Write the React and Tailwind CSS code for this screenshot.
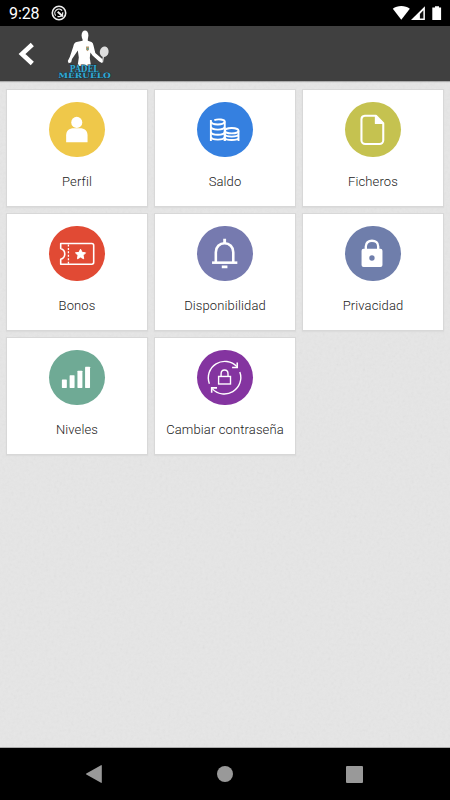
import React from 'react';

const ProfileIcon = () => (
  <g fill="#fff">
    <circle cx="28" cy="20.6" r="5.6" />
    <path d="M17.3 40.6V33.5C17.3 29 20.5 26.4 25 26.4h6.2c4.5 0 7.7 2.6 7.7 7.1v7.1z" />
  </g>
);

const CoinsIcon = () => (
  <g fill="none" stroke="#fff" strokeWidth="1.9">
    <path d="M17.5 18.2c4-1.4 10.5-.6 10.5 1.5v19.6M14 18.2v21.1" />
    <path d="M14 19.7c1 4 13 4 14 0M14 25c1 3.800 13 3.800 14 0M14 30.200c1 3.800 13 3.800 14 0M14 35.400c1 3.400 13 3.400 14 0" />
    <ellipse cx="35" cy="29" rx="6.9" ry="2.7" />
    <path d="M41.9 29v10.3M28 29v10.3M28 32.5c1 3.200 13 3.200 14 0M28 36c1 3.200 13 3.200 14 0" />
  </g>
);

const FileIcon = () => (
  <g fill="none" stroke="#fff" strokeWidth="2.1" strokeLinejoin="round">
    <path d="M20 13.9h11.2l7.4 7.5v17.2a3.8 3.8 0 0 1-3.8 3.8H20.4a3.8 3.8 0 0 1-3.8-3.8V17.5a3.6 3.6 0 0 1 3.4-3.6z" />
    <path d="M30.7 14v7.6h7.6z" fill="#fff" strokeWidth="1.2" />
  </g>
);

const TicketIcon = () => (
  <g fill="none" stroke="#fff" strokeWidth="1.6" strokeLinejoin="round">
    <path d="M11.8 17.700h31.400a1.900 1.900 0 0 1 1.900 1.900v17.100a1.900 1.900 0 0 1-1.900 1.900H11.800v-5c3.300-1 4.100-3 4.100-5.400s-.8-4.400-4.100-5.400z" />
    <path d="M19.6 18.6v19.6" strokeDasharray="2 1.5" strokeWidth="1.3" />
    <path
      d="M31.8 23.4l1.6 3.2 3.5.5-2.5 2.500.6 3.500-3.200-1.700-3.100 1.700.6-3.500-2.600-2.500 3.600-.5z"
      fill="#fff"
      strokeWidth="1"
    />
  </g>
);

const BellIcon = () => (
  <g fill="none" stroke="#fff" strokeWidth="2.6">
    <path d="M19 36.5V26.400c0-5.300 3.800-9 8.800-9s8.800 3.700 8.800 9v10.100" />
    <path d="M15.2 37h25.5" />
    <path d="M27.9 12.8v4.4M25 41.3h5.7" strokeWidth="2.9" />
  </g>
);

const LockIcon = () => (
  <g fill="none" stroke="#fff">
    <path d="M21 24v-3.400c0-3.600 2.600-5.700 6.200-5.700s6.300 2.100 6.300 5.700V24" strokeWidth="2.4" />
    <path
      fillRule="evenodd"
      fill="#fff"
      stroke="none"
      d="M18.7 23h17.100a2 2 0 0 1 2 2v14.300a2 2 0 0 1-2 2H18.700a2 2 0 0 1-2-2V25a2 2 0 0 1 2-2zM27.200 29.600a2.700 2.700 0 1 0 0 5.400 2.700 2.700 0 1 0 0-5.400z"
    />
  </g>
);

const LevelsIcon = () => (
  <g fill="#fff">
    <rect x="13" y="29.7" width="5" height="8.7" rx=".5" />
    <rect x="20.8" y="25.4" width="5" height="13" rx=".5" />
    <rect x="28.7" y="21" width="5" height="17.4" rx=".5" />
    <rect x="36.4" y="16.8" width="5" height="21.6" rx=".5" />
  </g>
);

const ChangePasswordIcon = () => (
  <g fill="none" stroke="#fff" strokeWidth="1.4">
    <path d="M12.5 34A16.6 16.6 0 0 1 40.2 16.8" />
    <path d="M40.6 12.6v5h-5.2" strokeWidth="1.6" />
    <path d="M43.2 22.2A16.6 16.6 0 0 1 15.3 39" />
    <path d="M14.8 43.2v-5h5.4" strokeWidth="1.6" />
    <rect x="21.8" y="26.7" width="12" height="7.6" />
    <path d="M24.3 26.500v-2.400c0-2.400 1.300-3.900 3.500-3.900s3.500 1.500 3.500 3.900v2.400" />
  </g>
);

const menuItems = [
  { label: 'Perfil', color: 'bg-[#efc84a]', icon: ProfileIcon },
  { label: 'Saldo', color: 'bg-[#3580e0]', icon: CoinsIcon },
  { label: 'Ficheros', color: 'bg-[#c5c250]', icon: FileIcon },
  { label: 'Bonos', color: 'bg-[#e14a34]', icon: TicketIcon },
  { label: 'Disponibilidad', color: 'bg-[#767aaf]', icon: BellIcon },
  { label: 'Privacidad', color: 'bg-[#6f7eab]', icon: LockIcon },
  { label: 'Niveles', color: 'bg-[#6faa95]', icon: LevelsIcon },
  { label: 'Cambiar contraseña', color: 'bg-[#8434a0]', icon: ChangePasswordIcon },
];

const Logo = () => (
  <svg width="56" height="52" viewBox="0 0 56 52">
    {/* Jugador */}
    <g fill="#fff">
      <ellipse cx="28" cy="7.4" rx="3.4" ry="5" />
      <path d="M25.600 9.500h5.200v3.300l3.700 1.300q1.600.8 2 3.400l1.800 7.500 7.200 6.300-.6 3.700-2.700-1.500-6.700-6.100-2.100-3-.6 5.600 1.200 8H20.600l1.200-8.500-1-7-5.800 8.500-.8 3.300-2.500 1-.9-2.400 2-3.800 3.500-10.600q.6-3.600 3.200-4.400l6.100-1.300z" />
      <path d="M45.4 34.500l1.100-6.500" stroke="#ddd" strokeWidth="1.3" />
      <ellipse cx="47.200" cy="23.8" rx="4.400" ry="5.300" fill="#dedede" transform="rotate(12 47.200 23.800)" />
    </g>
    <path d="M29 18.600h3v3.200l-1.500 1.400-1.500-1.400z" fill="#b49a72" />
    <path d="M30.200 20h1.200v1.700h-1.200z" fill="#39a3a8" />
    {/* Nombre del club */}
    <g
      fill="#32a9d4"
      stroke="#1c3038"
      strokeWidth=".8"
      paintOrder="stroke"
      fontFamily="'DejaVu Serif', serif"
      fontWeight="700"
    >
      <text x="12.7" y="43.6" fontSize="9.4" textLength="29" lengthAdjust="spacingAndGlyphs">PADEL</text>
      <text x="1.200" y="49.500" fontSize="7.300" textLength="52.500" lengthAdjust="spacingAndGlyphs">MERUELO</text>
    </g>
  </svg>
);

const StatusBar = () => (
  <div className="flex h-[26px] items-center justify-between bg-black pl-[9px] pr-[8px] text-white">
    <div className="flex items-center gap-[12px]">
      <span className="pt-px text-[16px] leading-[25px] tracking-[-0.1px]">9:28</span>
      <svg width="16" height="16" viewBox="0 0 16 16" fill="none" stroke="#eee">
        <circle cx="8" cy="8" r="6.7" strokeWidth="1.6" />
        <path d="M4.700 10.700a4 4 0 0 1 6.400-5.100M11.800 7.300a3.900 3.900 0 0 1-5.300 4.100" strokeWidth="1.2" />
        <path d="M6.7 6.7l5.2 4.7" strokeWidth="2" />
      </svg>
    </div>
    <svg width="50" height="16" viewBox="0 0 50 16" fill="#fff">
      <path d="M.8 3.700C5.200.2 13.400.2 17.800 3.700L9.300 14.800z" />
      <path d="M32.9 1.2v13.7H19z" />
      <path d="M27.9 9l3.5-3.8v8.4h-3.5z" fill="#111" />
      <path d="M43 1.3h4v1.2h2.1v12.4h-8.8V2.5H43z" />
    </svg>
  </div>
);

const MenuCard = ({ label, color, icon: Icon }) => (
  <button className="flex h-[118px] flex-col items-center border border-[#d8d8d8] bg-white pt-[11.5px] shadow-[0_1px_1px_#dcdcdc]">
    <span className={`size-[55.5px] shrink-0 rounded-full ${color}`}>
      <svg viewBox="0 0 56 56" className="size-full">
        <Icon />
      </svg>
    </span>
    <span className="mt-[15px] whitespace-nowrap text-[13px] font-light leading-[20px] tracking-[0.12px] text-[#222]">
      {label}
    </span>
  </button>
);

const App = () => {
  return (
    <div className="flex h-[800px] w-[450px] flex-col overflow-hidden bg-[#e6e6e6] font-['Roboto',sans-serif]">
      <StatusBar />

      <header className="flex h-[55px] shrink-0 items-center bg-[#404040] pl-[18px] shadow-[0_1px_1px_#aaa]">
        <button className="mr-[22px]">
          <svg width="17" height="24" viewBox="0 0 17 24" fill="none" stroke="#fff" strokeWidth="4.6">
            <path d="M14.3 2.5L4 12l10.3 9.5" />
          </svg>
        </button>
        <Logo />
      </header>

      <main className="relative flex-1 border-b border-[#aaa]">
        {/* Textura de papel del fondo */}
        <svg className="absolute inset-0 size-full opacity-[0.08]">
          <filter id="grain">
            <feTurbulence type="fractalNoise" baseFrequency="0.35" numOctaves="3" />
            <feColorMatrix type="saturate" values="0" />
          </filter>
          <rect width="100%" height="100%" filter="url(#grain)" />
        </svg>
        <div className="relative grid grid-cols-3 gap-[6px] px-[6px] pt-[8px]">
          {menuItems.map((item) => (
            <MenuCard key={item.label} {...item} />
          ))}
        </div>
      </main>

      <nav className="flex h-[52px] shrink-0 items-center justify-between bg-black pl-[85px] pr-[87px]">
        <svg width="18" height="20" viewBox="0 0 18 20" fill="#999">
          <path d="M16 1.200q.8-.4.800.5v16.600q0 .9-.8.500L1.300 10.500q-.8-.5 0-1z" />
        </svg>
        <span className="size-[16px] rounded-full bg-[#999]" />
        <span className="size-[17px] rounded-[1px] bg-[#999]" />
      </nav>
    </div>
  );
};

export default App;
